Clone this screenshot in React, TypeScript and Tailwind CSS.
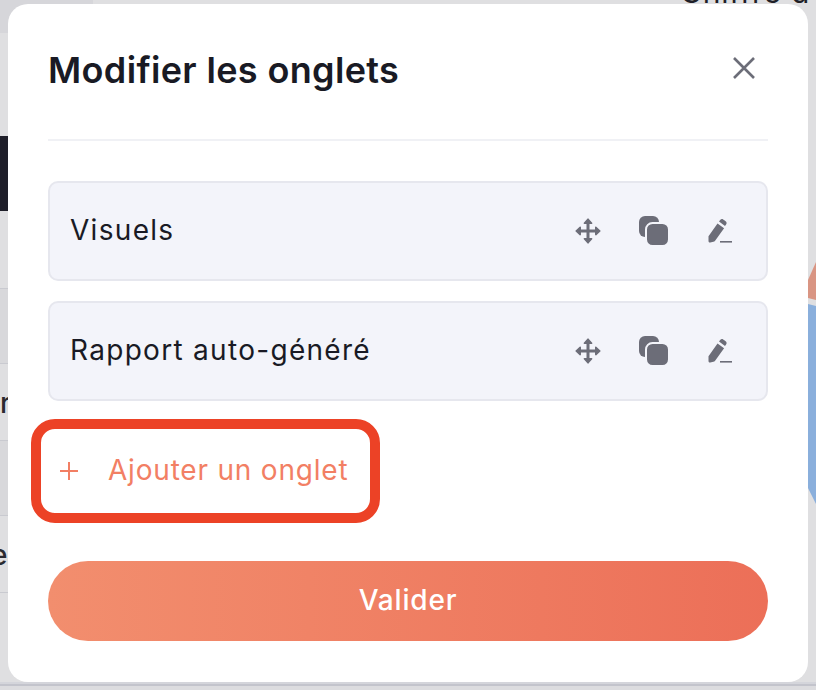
function MoveIcon() {
  return (
    <svg width="26" height="26" viewBox="0 0 26 26" fill="#6c6d78" stroke="#6c6d78" strokeLinejoin="round">
      <path d="M13 4v18M4 13h18" fill="none" strokeWidth="3" />
      <path d="M13 1.2l3.6 4h-7.2zM13 24.8l3.6-4h-7.2zM1.2 13l4-3.6v7.2zM24.8 13l-4-3.6v7.2z" strokeWidth="1.6" />
    </svg>
  )
}

function CopyIcon() {
  return (
    <svg width="32" height="32" viewBox="0 0 32 32">
      <rect x="1" y="1" width="20" height="21" rx="6" fill="#6c6d78" />
      <rect x="8" y="8" width="23" height="23" rx="6.5" fill="#6c6d78" stroke="#f3f4fa" strokeWidth="2" />
    </svg>
  )
}

function PencilIcon() {
  return (
    <svg width="26" height="26" viewBox="0 0 26 26" fill="#6c6d78">
      <path d="M1.5 18.2L10.5 5.6l6.6 4.7-9 12.4c-.5.6-1 .9-1.7 1l-3.2.7c-1 .2-1.8-.5-1.7-1.5z" />
      <path d="M12 3.6l1.2-1.7c.8-1 2-1.2 3-.5l2.5 1.8c1 .8 1.2 2 .5 3l-1.2 1.7z" />
      <rect x="13" y="23" width="12" height="1.6" />
    </svg>
  )
}

function TabRow({ label }: { label: string }) {
  return (
    <div className="flex h-[100px] items-center justify-between rounded-[10px] border-2 border-[#e6e7ee] bg-[#f3f4fa] pl-5 pr-[33px]">
      <span className="mb-[2px] text-[28px] tracking-[1.3px] text-[#191a24]">{label}</span>
      <div className="flex items-center gap-[37px]">
        <MoveIcon />
        <CopyIcon />
        <PencilIcon />
      </div>
    </div>
  )
}

export default function App() {
  return (
    <div className="relative h-[690px] w-[816px] overflow-hidden bg-[#dfdfe1] font-['Inter',sans-serif]">
      {/* page behind the modal */}
      <div className="absolute left-0 top-0 h-[33px] w-[93px] bg-[#d6d6da]" />
      <div className="absolute left-0 top-[136px] h-[75px] w-[8px] bg-[#1e1e29]" />
      <div className="absolute left-0 top-[288px] h-[76px] w-[8px] border-y border-[#c9cad0] bg-[#d8d8db]" />
      <div className="absolute left-0 top-[440px] h-[76px] w-[8px] border-y border-[#c9cad0] bg-[#d8d8db]" />
      <div className="absolute left-0 top-[592px] h-px w-[8px] bg-[#c9cad0]" />
      <div className="absolute left-0 top-[388px] w-[8px] overflow-hidden text-[28px] font-medium leading-[30px] text-[#2a2a30]">r</div>
      <div className="absolute left-[-9px] top-[540px] text-[28px] font-medium leading-[30px] text-[#2a2a30]">e</div>
      <div className="absolute left-[680px] top-[-26px] whitespace-nowrap text-[30px] leading-[36px] tracking-[0.8px] text-[#1f1f28]">Chiffre d'a</div>
      <svg className="absolute left-[808px] top-[250px]" width="8" height="270" viewBox="0 0 8 270">
        <path d="M0 30L8 12V50L0 48z" fill="#d99583" />
        <path d="M0 54L8 56V254L0 238z" fill="#8aafdc" />
      </svg>
      <div className="absolute bottom-0 left-0 h-[8px] w-full border-b-[4px] border-[#dcdcdf] bg-[#d4d5db]">
        <div className="mt-[2px] h-[2px] bg-[#c3c4cc]" />
      </div>

      {/* modal */}
      <div className="relative z-10 ml-2 mt-1 h-[678px] w-[800px] rounded-[20px] bg-white px-10">
        <div className="flex h-[137px] items-center justify-between border-b-2 border-[#f0f1f5] pb-[4px]">
          <h1 className="text-[36px] font-semibold tracking-[0.35px] text-[#191a24]">Modifier les onglets</h1>
          <button className="mb-[4px] mr-[13px] text-[#6c6d78]">
            <svg width="22" height="22" viewBox="0 0 22 22" fill="none" stroke="currentColor" strokeWidth="2.6">
              <path d="M1 1l20 20M21 1L1 21" />
            </svg>
          </button>
        </div>

        <div className="mt-[40px] flex flex-col gap-5">
          <TabRow label="Visuels" />
          <TabRow label="Rapport auto-généré" />
        </div>

        <div className="relative mt-5 flex h-[100px] items-center gap-[30px] pl-[11px] text-[#f27f64]">
          <svg width="20" height="20" viewBox="0 0 20 20" fill="none" stroke="currentColor" strokeWidth="2">
            <path d="M10 1v18M1 10h18" />
          </svg>
          <span className="mb-[2px] ml-[-1px] text-[28px] tracking-[0.8px]">Ajouter un onglet</span>
          {/* annotation round the button */}
          <div className="absolute -left-[17px] -top-[2px] h-[104px] w-[349px] rounded-[24px] border-[10px] border-[#ec4226]" />
        </div>

        <button className="mt-[40px] h-20 w-full rounded-[40px] bg-gradient-to-r from-[#f28e6e] to-[#ec6f58] pb-[3px] text-[28px] font-medium tracking-[0.8px] text-white">
          Valider
        </button>
      </div>
    </div>
  )
}
